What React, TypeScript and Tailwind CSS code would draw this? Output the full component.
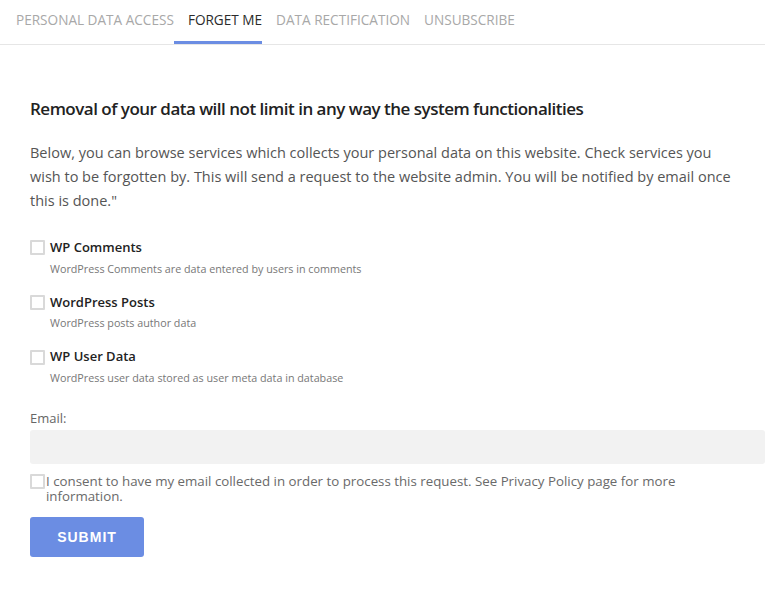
import { useState } from 'react'

const tabs = ['Personal Data Access', 'Forget Me', 'Data Rectification', 'Unsubscribe']

const services = [
  { id: 'wp-comments', title: 'WP Comments', desc: 'WordPress Comments are data entered by users in comments' },
  { id: 'wp-posts', title: 'WordPress Posts', desc: 'WordPress posts author data' },
  { id: 'wp-user', title: 'WP User Data', desc: 'WordPress user data stored as user meta data in database' },
]

function Box({ checked, onClick }: { checked: boolean; onClick: () => void }) {
  return (
    <button
      type="button"
      onClick={onClick}
      className={`w-[15px] h-[15px] shrink-0 border-2 border-[#d9d9d9] bg-white rounded-[1px] ${checked ? 'bg-[#6b8de3] border-[#6b8de3]' : ''}`}
    />
  )
}

export default function App() {
  const [active, setActive] = useState(1)
  const [picked, setPicked] = useState<Record<string, boolean>>({})
  const [consent, setConsent] = useState(false)

  return (
    <div className="min-h-screen bg-white font-['Open_Sans',sans-serif] overflow-hidden">
      <div className="flex gap-[14px] pl-4 border-b border-[#e6e6e6] h-[45px]">
        {tabs.map((t, i) => (
          <button
            key={t}
            onClick={() => setActive(i)}
            className={`relative h-full flex flex-col justify-start uppercase text-[13.6px] leading-5 pt-[10px] ${i === active ? 'text-[#2b2b2b]' : 'text-[#a8a8a8]'}`}
          >
            {t}
            {i === active && <span className="absolute -left-[14px] right-0 bottom-0 h-[3px] bg-[#6b8de3]" />}
          </button>
        ))}
      </div>

      <div className="pl-[30px] pr-[20px] pt-[52px]">
        <h2 className="text-[17px] font-semibold text-[#222] leading-6 tracking-[-0.5px]">
          Removal of your data will not limit in any way the system functionalities
        </h2>
        <p className="mt-[20px] text-[14.5px] leading-6 text-[#555]">
          Below, you can browse services which collects your personal data on this website. Check services you wish to be
          forgotten by. This will send a request to the website admin. You will be notified by email once this is done."
        </p>

        <div className="mt-[25px] flex flex-col gap-[16px]">
          {services.map((s) => (
            <div key={s.id}>
              <div className="flex items-center gap-[5px]">
                <Box checked={!!picked[s.id]} onClick={() => setPicked((p) => ({ ...p, [s.id]: !p[s.id] }))} />
                <span className="text-[13px] font-semibold text-[#222]">{s.title}</span>
              </div>
              <div className="pl-[20px] mt-[3px] text-[10.75px] text-[#777]">{s.desc}</div>
            </div>
          ))}
        </div>

        <label className="block mt-[23px] text-[13px] text-[#666]">Email:</label>
        <input className="mt-[2px] w-[735px] h-[34px] bg-[#f2f2f2] rounded-[3px] outline-none px-3 text-sm" />

        <div className="mt-[10px] flex items-start">
          <Box checked={consent} onClick={() => setConsent((c) => !c)} />
          <p className="ml-[1px] text-[13.3px] leading-[15px] text-[#6a6a6a]">
            I consent to have my email collected in order to process this request. See Privacy Policy page for more
            information.
          </p>
        </div>

        <button className="mt-[13px] w-[114px] h-[40px] bg-[#6b8de3] rounded-[3px] text-white font-['Liberation_Sans',sans-serif] font-bold text-[14px] tracking-[1px]">
          SUBMIT
        </button>
      </div>
    </div>
  )
}
